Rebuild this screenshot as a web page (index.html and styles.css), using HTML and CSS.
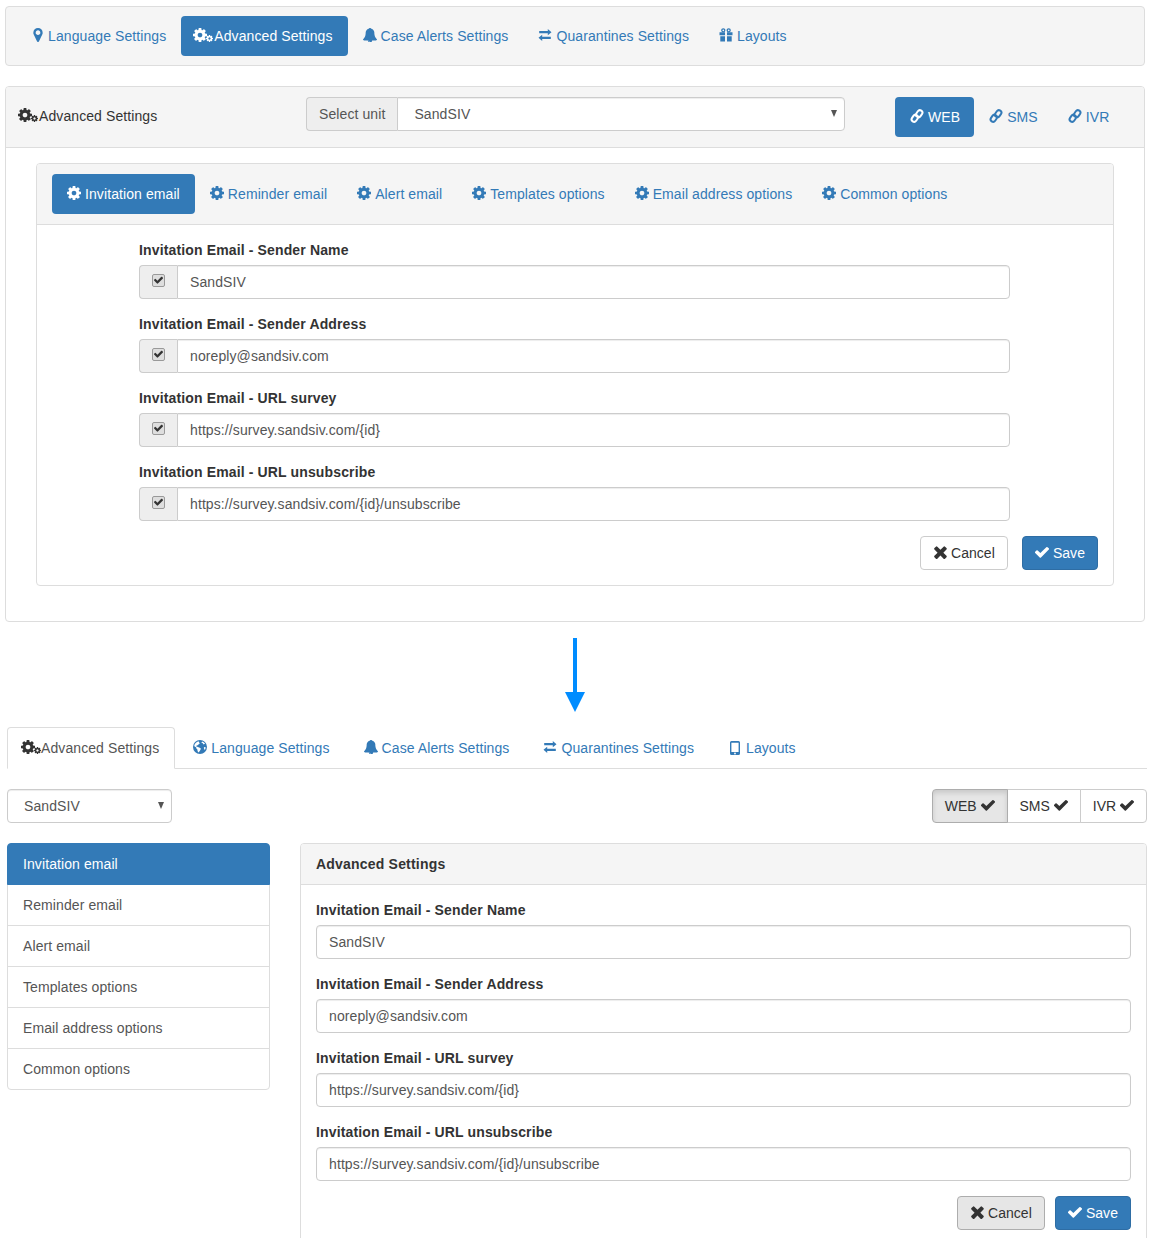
FILE: index.html
```html
<!DOCTYPE html>
<html lang="en">
<head>
<meta charset="utf-8">
<title>Advanced Settings</title>
<link rel="stylesheet" href="styles.css">
</head>
<body>
<svg class="defs" xmlns="http://www.w3.org/2000/svg">
<symbol id="cog" viewBox="128 128 1536 1536"><path fill-rule="evenodd" d="M1152 896q0-106-75-181t-181-75-181 75-75 181 75 181 181 75 181-75 75-181zm512-109v222q0 12-8 23t-20 13l-185 28q-19 54-39 91 35 50 107 138 10 12 10 25t-9 23q-27 37-99 108t-94 71q-12 0-26-9l-138-108q-44 23-91 38-16 136-29 186-7 28-36 28h-222q-14 0-24.500-8.500t-11.500-21.500l-28-184q-49-16-90-37l-141 107q-10 9-25 9-14 0-25-11-126-114-165-168-7-10-7-23 0-12 8-23 15-21 51-66.500t54-70.500q-27-50-41-99l-183-27q-13-2-21-12.500t-8-23.500v-222q0-12 8-23t19-13l186-28q14-46 39-92-40-57-107-138-10-12-10-24 0-10 9-23 26-36 98.500-107.500t94.500-71.500q13 0 26 10l138 107q44-23 91-38 16-136 29-186 7-28 36-28h222q14 0 24.500 8.500t11.500 21.500l28 184q49 16 90 37l142-107q9-9 24-9 13 0 25 10 129 119 165 170 7 8 7 22 0 12-8 23-15 21-51 66.500t-54 70.500q26 50 41 98l183 28q13 2 21 12.500t8 23.500z"/></symbol>
<symbol id="cogs" viewBox="0 0 20 14"><use href="#cog" x="0" y="0" width="14" height="14"/><use href="#cog" x="13" y="7" width="7" height="7"/></symbol>
<symbol id="marker" viewBox="0 128 1024 1536"><path fill-rule="evenodd" d="M768 640q0-106-75-181t-181-75-181 75-75 181 75 181 181 75 181-75 75-181zm256 0q0 109-33 179l-364 774q-16 33-47.500 52t-67.500 19-67.500-19-46.500-52l-365-774q-33-70-33-179 0-212 150-362t362-150 362 150 150 362z"/></symbol>
<symbol id="bell" viewBox="64 64 1664 1664"><path d="M912 1696q0-16-16-16-59 0-101.500-42.500t-42.500-101.500q0-16-16-16t-16 16q0 73 51.500 124.500t124.500 51.500q16 0 16-16zm816-288q0 52-38 90t-90 38h-448q0 106-75 181t-181 75-181-75-75-181h-448q-52 0-90-38t-38-90q50-42 91-88t85-119.500 74.500-158.500 50-206 19.500-260q0-152 117-282.500t307-158.500q-8-19-8-39 0-40 28-68t68-28 68 28 28 68q0 20-8 39 190 28 307 158.500t117 282.500q0 139 19.500 260t50 206 74.500 158.500 85 119.500 91 88z"/></symbol>
<symbol id="exchange" viewBox="0 0 14 14"><path d="M9.800 1v2H1.200v2.300h8.600v2L13.500 4.200zM4.200 6.700 .5 9.800l3.700 3.200v-2h8.600V8.700H4.200z"/></symbol>
<symbol id="gift" viewBox="0 0 14 14"><circle cx="4.300" cy="2.300" r="1.500" fill="none" stroke="currentColor" stroke-width="1.300"/><circle cx="9.700" cy="2.300" r="1.500" fill="none" stroke="currentColor" stroke-width="1.300"/><path d="M.5 4.200H6v3H.5zM8 4.200h5.500v3H8zM1.300 8.200H6v5.300H1.300zM8 8.200h4.700v5.300H8z"/></symbol>
<symbol id="link" viewBox="0 0 14 14"><g fill="none" stroke="currentColor" stroke-width="2"><rect x="5.500" y="2.200" width="7.400" height="5" rx="2.500" transform="rotate(-55 9.200 4.700)"/><rect x="1.100" y="6.800" width="7.400" height="5" rx="2.500" transform="rotate(-55 4.800 9.300)"/></g></symbol>
<symbol id="check" viewBox="128 256 1536 1280"><path d="M1671 566q0 40-28 68l-724 724-136 136q-28 28-68 28t-68-28l-136-136-362-362q-28-28-28-68t28-68l136-136q28-28 68-28t68 28l294 295 656-657q28-28 68-28t68 28l136 136q28 28 28 68z"/></symbol>
<symbol id="times" viewBox="300 240 1200 1320"><path d="M1490 1322q0 40-28 68l-136 136q-28 28-68 28t-68-28l-294-294-294 294q-28 28-68 28t-68-28l-136-136q-28-28-28-68t28-68l294-294-294-294q-28-28-28-68t28-68l136-136q28-28 68-28t68 28l294 294 294-294q28-28 68-28t68 28l136 136q28 28 28 68t-28 68l-294 294 294 294q28 28 28 68z"/></symbol>
<symbol id="globe" viewBox="0 0 14 14"><path fill-rule="evenodd" d="M7 0a7 7 0 1 1 0 14A7 7 0 0 1 7 0zM5.500 1.200C3.300 1.800 1.600 3.600 1.200 6c.6.500 1.100 1 1.800 1.200.5.600.3 1.300.8 1.800.7.300.8 1 .7 1.800.1.900.6 1.400 1 1.800.5-.9 1.300-1.500 1.700-2.400.1-.8.800-1 .6-1.800-.6-.6-1.500-.9-2.300-1.100-.6-.6-1.500-.8-2-.4-.2-.6-.1-1.200.4-1.600.6-.1 1 .2 1.400-.3-.1-.7.600-1 1.200-1.300.3-.5.100-1.100-.4-1.300-.1-.3-.2-.5-.3-.7zM9.300 1.500c-.2.500-.9.700-.8 1.300.5.400 1.300.1 1.500.8-.1.500.6 1 1.100.7.300-.4.800-.3 1.100-.1-.6-1.200-1.700-2.200-2.900-2.700zM11.600 7c-.5.200-.9.700-.7 1.300.2.700.7 1.200.9 1.800.5-.8.800-1.800.8-2.700-.3-.3-.6-.5-1-.4z"/></symbol>
<symbol id="mobile" viewBox="0 0 10 14"><path fill-rule="evenodd" d="M1.500 0h7A1.500 1.500 0 0 1 10 1.500v11A1.500 1.500 0 0 1 8.500 14h-7A1.500 1.500 0 0 1 0 12.500v-11A1.500 1.500 0 0 1 1.500 0zM1.400 1.800v9.300h7.200V1.800zM5 11.600a.9.900 0 1 0 0 1.800.9.900 0 0 0 0-1.800z"/></symbol>
</svg>

<div class="page">
  <nav class="panel bar pills">
    <a class="pill"><svg class="i i-marker"><use href="#marker"/></svg>Language Settings</a>
    <a class="pill active"><svg class="i i-cogs"><use href="#cogs"/></svg>Advanced Settings</a>
    <a class="pill"><svg class="i"><use href="#bell"/></svg>Case Alerts Settings</a>
    <a class="pill"><svg class="i"><use href="#exchange"/></svg>Quarantines Settings</a>
    <a class="pill"><svg class="i"><use href="#gift"/></svg>Layouts</a>
  </nav>

  <section class="panel outer">
    <header class="outer-head">
      <div class="outer-title"><svg class="i i-cogs dark"><use href="#cogs"/></svg>Advanced Settings</div>
      <div class="group unit-group">
        <span class="addon unit-label">Select unit</span>
        <select class="field" aria-label="Select unit"><option>SandSIV</option></select>
      </div>
      <div class="pills channel-pills">
        <a class="pill active"><svg class="i"><use href="#link"/></svg>WEB</a>
        <a class="pill"><svg class="i"><use href="#link"/></svg>SMS</a>
        <a class="pill"><svg class="i"><use href="#link"/></svg>IVR</a>
      </div>
    </header>
    <div class="outer-body">
      <section class="panel inner">
        <nav class="inner-head pills">
          <a class="pill active"><svg class="i"><use href="#cog"/></svg>Invitation email</a>
          <a class="pill"><svg class="i"><use href="#cog"/></svg>Reminder email</a>
          <a class="pill"><svg class="i"><use href="#cog"/></svg>Alert email</a>
          <a class="pill"><svg class="i"><use href="#cog"/></svg>Templates options</a>
          <a class="pill"><svg class="i"><use href="#cog"/></svg>Email address options</a>
          <a class="pill"><svg class="i"><use href="#cog"/></svg>Common options</a>
        </nav>
        <form class="inner-form">
          <label class="lbl">Invitation Email - Sender Name</label>
          <div class="group"><span class="addon check-addon"><span class="cb"><svg class="cb-mark"><use href="#check"/></svg></span></span><input class="field" value="SandSIV"></div>
          <label class="lbl">Invitation Email - Sender Address</label>
          <div class="group"><span class="addon check-addon"><span class="cb"><svg class="cb-mark"><use href="#check"/></svg></span></span><input class="field" value="noreply@sandsiv.com"></div>
          <label class="lbl">Invitation Email - URL survey</label>
          <div class="group"><span class="addon check-addon"><span class="cb"><svg class="cb-mark"><use href="#check"/></svg></span></span><input class="field" value="https://survey.sandsiv.com/{id}"></div>
          <label class="lbl">Invitation Email - URL unsubscribe</label>
          <div class="group"><span class="addon check-addon"><span class="cb"><svg class="cb-mark"><use href="#check"/></svg></span></span><input class="field" value="https://survey.sandsiv.com/{id}/unsubscribe"></div>
          <div class="actions actions-top">
            <button type="button" class="btn"><svg class="i i-times"><use href="#times"/></svg>Cancel</button>
            <button type="button" class="btn primary"><svg class="i"><use href="#check"/></svg>Save</button>
          </div>
        </form>
      </section>
    </div>
  </section>

  <div class="arrow"><svg class="arrow-svg" viewBox="0 0 20 74"><path d="M8 0h4v54h8L10 74 0 54h8z"/></svg></div>

  <div class="lower">
    <nav class="tabs">
      <a class="tab active"><svg class="i i-cogs dark"><use href="#cogs"/></svg>Advanced Settings</a>
      <a class="tab"><svg class="i"><use href="#globe"/></svg>Language Settings</a>
      <a class="tab"><svg class="i"><use href="#bell"/></svg>Case Alerts Settings</a>
      <a class="tab"><svg class="i"><use href="#exchange"/></svg>Quarantines Settings</a>
      <a class="tab"><svg class="i i-mobile"><use href="#mobile"/></svg>Layouts</a>
    </nav>
    <div class="toolbar">
      <select class="field unit-select" aria-label="Unit"><option>SandSIV</option></select>
      <div class="toggle">
        <span class="toggle-btn on">WEB <svg class="i i-tick"><use href="#check"/></svg></span>
        <span class="toggle-btn">SMS <svg class="i i-tick"><use href="#check"/></svg></span>
        <span class="toggle-btn">IVR <svg class="i i-tick"><use href="#check"/></svg></span>
      </div>
    </div>
    <div class="columns">
      <ul class="list">
        <li class="active">Invitation email</li>
        <li>Reminder email</li>
        <li>Alert email</li>
        <li>Templates options</li>
        <li>Email address options</li>
        <li>Common options</li>
      </ul>
      <section class="panel form-panel">
        <h2 class="form-head">Advanced Settings</h2>
        <form class="form-body">
          <label class="lbl">Invitation Email - Sender Name</label>
          <div class="group"><input class="field" value="SandSIV"></div>
          <label class="lbl">Invitation Email - Sender Address</label>
          <div class="group"><input class="field" value="noreply@sandsiv.com"></div>
          <label class="lbl">Invitation Email - URL survey</label>
          <div class="group"><input class="field" value="https://survey.sandsiv.com/{id}"></div>
          <label class="lbl">Invitation Email - URL unsubscribe</label>
          <div class="group"><input class="field" value="https://survey.sandsiv.com/{id}/unsubscribe"></div>
          <div class="actions actions-bottom">
            <button type="button" class="btn pressed"><svg class="i i-times"><use href="#times"/></svg>Cancel</button>
            <button type="button" class="btn primary"><svg class="i"><use href="#check"/></svg>Save</button>
          </div>
        </form>
      </section>
    </div>
  </div>
</div>
</body>
</html>
```
FILE: styles.css
```css
* { box-sizing: border-box; }
html, body { margin: 0; background: #fff; }
body { font: 14px/20px "Liberation Sans", Arial, sans-serif; letter-spacing: .09px; color: #333; }
.defs { display: none; }
.page { height: 1238px; overflow: hidden; padding: 6px 10px 0 5px; }

.i { display: inline-block; width: 14px; height: 14px; margin-right: 4px; fill: currentColor; vertical-align: -1px; }
.i-marker { width: 10px; margin-right: 5px; }
.i-cogs { width: 20px; margin-right: 1px; }
.pill .i-cogs { margin-left: -3px; }
.tab .i-cogs { margin-right: 0; }
.i-times { width: 13px; margin-left: 1px; }
.i-mobile { width: 10px; margin: 0 6px 0 2px; vertical-align: -2px; }
.i-tick { margin: 0; vertical-align: -1px; }
.dark { color: #333; }

.panel { background: #fff; border: 1px solid #ddd; border-radius: 4px; }
.pills { display: flex; align-items: flex-start; }
.pill { display: block; padding: 10px 15px; color: #337ab7; border-radius: 4px; white-space: nowrap; }
.pill.active { background: #337ab7; color: #fff; }

.bar { background: #f5f5f5; height: 60px; padding: 9px 12px; }

.outer { margin-top: 20px; height: 536px; }
.outer-head { display: grid; grid-template-columns: 288px 539px auto; height: 61px; padding: 10px 0 0 12px; background: #f5f5f5; border-bottom: 1px solid #ddd; border-radius: 3px 3px 0 0; }
.outer-title { padding-top: 9px; }
.unit-group { height: 34px; }
.channel-pills { margin-left: 50px; }
.channel-pills .pill.active { padding-right: 14px; }
.outer-body { padding: 15px 30px 0; }

.inner { height: 423px; }
.inner-head { height: 61px; padding: 10px 15px; background: #f5f5f5; border-bottom: 1px solid #ddd; border-radius: 3px 3px 0 0; }
.inner-form { padding: 15px 103px 0 102px; }

.lbl { display: block; margin-bottom: 5px; font-weight: 700; letter-spacing: .14px; }
.group { display: flex; height: 34px; margin-bottom: 15px; }
.addon { display: flex; align-items: center; flex: none; padding: 0 12px; background: #eee; border: 1px solid #ccc; border-right: 0; border-radius: 4px 0 0 4px; color: #555; }
.addon + .field { border-radius: 0 4px 4px 0; }
.check-addon { width: 38px; padding: 0 0 4px 12px; }
.cb { display: flex; align-items: center; justify-content: center; width: 13px; height: 13px; background: #dedede; border: 1px solid #999; border-radius: 2px; }
.cb-mark { width: 9px; height: 8px; fill: #333; }
.field { flex: 1; min-width: 0; width: 100%; height: 34px; padding: 6px 12px; font: inherit; letter-spacing: .1px; color: #555; background: #fff; border: 1px solid #ccc; border-radius: 4px; box-shadow: inset 0 1px 1px rgba(0, 0, 0, .075); }
select.field { appearance: none; padding-left: 16px; background: #fff url("data:image/svg+xml,%3Csvg xmlns='http://www.w3.org/2000/svg' width='6' height='7'%3E%3Cpath d='M0 0h6L3 7z' fill='%23555'/%3E%3C/svg%3E") no-repeat right 7px top 12px; }

.actions { display: flex; justify-content: flex-end; }
.actions-top { gap: 14px; margin-right: -88px; }
.actions-bottom { gap: 10px; }
.btn { height: 34px; padding: 6px 12px; font: inherit; letter-spacing: .05px; color: #333; background: #fff; border: 1px solid #ccc; border-radius: 4px; white-space: nowrap; }
.btn.primary { color: #fff; background: #337ab7; border-color: #2e6da4; }
.btn.pressed { background: #e6e6e6; border-color: #adadad; }

.arrow { display: flex; justify-content: center; height: 105px; padding-top: 16px; }
.arrow-svg { width: 20px; height: 74px; fill: #008cff; }

.lower { margin: 0 -2px 0 2px; }
.tabs { display: flex; height: 42px; border-bottom: 1px solid #ddd; }
.tab { display: block; height: 42px; margin-right: 2px; padding: 10px 15px; color: #337ab7; border: 1px solid transparent; border-radius: 4px 4px 0 0; white-space: nowrap; }
.tab.active { padding-left: 13px; color: #555; background: #fff; border-color: #ddd #ddd #fff; }

.toolbar { display: flex; justify-content: space-between; margin-top: 20px; }
.unit-select { flex: none; width: 165px; }
.toggle { display: flex; height: 34px; letter-spacing: 0; }
.toggle-btn { padding: 6px 12px; margin-left: -1px; background: #fff; border: 1px solid #ccc; white-space: nowrap; }
.toggle-btn:first-child { margin-left: 0; border-radius: 4px 0 0 4px; }
.toggle-btn:last-child { border-radius: 0 4px 4px 0; }
.toggle-btn.on { background: #e6e6e6; border-color: #adadad; box-shadow: inset 0 3px 5px rgba(0, 0, 0, .125); position: relative; }

.columns { display: grid; grid-template-columns: 263px 847px; justify-content: space-between; margin-top: 20px; align-items: start; }
.list { margin: 0; padding: 0; list-style: none; }
.list li { height: 42px; margin-bottom: -1px; padding: 10px 15px; color: #555; background: #fff; border: 1px solid #ddd; }
.list li:first-child { border-radius: 4px 4px 0 0; }
.list li:last-child { margin-bottom: 0; border-radius: 0 0 4px 4px; }
.list li.active { position: relative; color: #fff; background: #337ab7; border-color: #337ab7; }

.form-panel { height: 420px; }
.form-head { height: 41px; margin: 0; padding: 10px 15px; font-size: 14px; line-height: 20px; font-weight: 700; letter-spacing: .2px; background: #f5f5f5; border-bottom: 1px solid #ddd; border-radius: 3px 3px 0 0; }
.form-body { padding: 15px; }
```
